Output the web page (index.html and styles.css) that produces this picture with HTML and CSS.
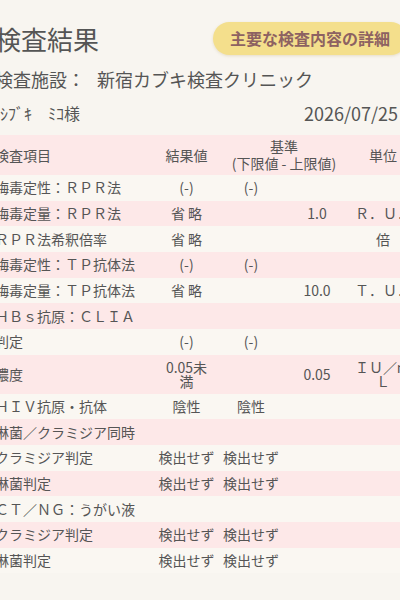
FILE: index.html
```html
<!DOCTYPE html>
<html lang="ja">
<head>
<meta charset="utf-8">
<title>検査結果</title>
<link rel="stylesheet" href="styles.css">
</head>
<body>
<div class="screen">
  <div class="page">
    <header class="top">
      <h1 class="title">検査結果</h1>
      <span class="badge">主要な検査内容の詳細</span>
    </header>
    <p class="facility"><span class="label">検査施設：</span><span class="value">新宿カブキ検査クリニック</span></p>
    <div class="patient"><span class="name">ｼﾌﾞｷ　ﾐｺ様</span><span class="date">2026/07/25</span></div>
    <table class="results">
      <colgroup>
        <col class="c-item"><col class="c-val"><col class="c-lo"><col class="c-hi"><col class="c-unit">
      </colgroup>
      <thead>
        <tr class="pink">
          <th class="item">検査項目</th>
          <th>結果値</th>
          <th colspan="2">基準<br>(下限値 - 上限値)</th>
          <th>単位</th>
        </tr>
      </thead>
      <tbody>
        <tr class="cream"><td class="item">梅毒定性：ＲＰＲ法</td><td>(-)</td><td>(-)</td><td></td><td></td></tr>
        <tr class="pink"><td class="item">梅毒定量：ＲＰＲ法</td><td>省 略</td><td></td><td>1.0</td><td>Ｒ．Ｕ．</td></tr>
        <tr class="cream"><td class="item">ＲＰＲ法希釈倍率</td><td>省 略</td><td></td><td></td><td>倍</td></tr>
        <tr class="pink"><td class="item">梅毒定性：ＴＰ抗体法</td><td>(-)</td><td>(-)</td><td></td><td></td></tr>
        <tr class="cream"><td class="item">梅毒定量：ＴＰ抗体法</td><td>省 略</td><td></td><td>10.0</td><td>Ｔ．Ｕ．</td></tr>
        <tr class="pink"><td class="item">ＨＢｓ抗原：ＣＬＩＡ</td><td></td><td></td><td></td><td></td></tr>
        <tr class="cream"><td class="item">判定</td><td>(-)</td><td>(-)</td><td></td><td></td></tr>
        <tr class="pink tall"><td class="item">濃度</td><td>0.05未<br>満</td><td></td><td>0.05</td><td>ＩＵ／ｍＬ</td></tr>
        <tr class="cream"><td class="item">ＨＩＶ抗原・抗体</td><td>陰性</td><td>陰性</td><td></td><td></td></tr>
        <tr class="pink"><td class="item">淋菌／クラミジア同時</td><td></td><td></td><td></td><td></td></tr>
        <tr class="cream"><td class="item">クラミジア判定</td><td>検出せず</td><td>検出せず</td><td></td><td></td></tr>
        <tr class="pink"><td class="item">淋菌判定</td><td>検出せず</td><td>検出せず</td><td></td><td></td></tr>
        <tr class="cream"><td class="item">ＣＴ／ＮＧ：うがい液</td><td></td><td></td><td></td><td></td></tr>
        <tr class="pink"><td class="item">クラミジア判定</td><td>検出せず</td><td>検出せず</td><td></td><td></td></tr>
        <tr class="cream"><td class="item">淋菌判定</td><td>検出せず</td><td>検出せず</td><td></td><td></td></tr>
      </tbody>
    </table>
  </div>
</div>
</body>
</html>
```
FILE: styles.css
```css
html, body {
  margin: 0;
  padding: 0;
  background: #f8f5f0;
}
body {
  font-family: "Noto Sans CJK JP", "Noto Sans", sans-serif;
  color: #555555;
}
.screen {
  width: 400px;
  height: 600px;
  overflow: hidden;
}
.page {
  margin-left: -5px;
  width: 421px;
  padding-top: 22px;
}
.top {
  display: flex;
  align-items: center;
  justify-content: space-between;
  padding-right: 9px;
}
.title {
  margin: 0;
  font-size: 26px;
  font-weight: 400;
  line-height: 33px;
  color: #555555;
}
.badge {
  flex-shrink: 0;
  height: 33px;
  line-height: 33px;
  padding: 0 17px;
  border-radius: 17px;
  background: #f4df8c;
  color: #8d6262;
  font-size: 16px;
  font-weight: 700;
  box-shadow: 0 1px 3px rgba(180, 150, 80, 0.25);
}
.facility {
  margin: 12px 0 0;
  font-size: 18px;
  line-height: 24px;
}
.facility .value {
  margin-left: 12px;
}
.patient {
  display: flex;
  justify-content: space-between;
  align-items: center;
  margin-top: 10px;
  height: 24px;
  padding-right: 18px;
}
.name {
  padding-left: 5px;
  font-size: 16px;
}
.date {
  font-size: 18px;
}
.results {
  margin-top: 10px;
  width: 421px;
  table-layout: fixed;
  border-collapse: collapse;
  font-size: 14px;
}
.c-item { width: 160px; }
.c-val { width: 63px; }
.c-lo { width: 66px; }
.c-hi { width: 66px; }
.c-unit { width: 66px; }
.results th {
  font-weight: 400;
  line-height: 17px;
  padding: 3px 0;
  text-align: center;
}
.results td {
  line-height: 15px;
  padding: 5.35px 0;
  text-align: center;
  white-space: normal;
}
.results .item {
  text-align: left;
}
.results tr.tall td {
  line-height: 14px;
}
.pink { background: #fde8e8; }
.cream { background: #faf7f2; }
```
